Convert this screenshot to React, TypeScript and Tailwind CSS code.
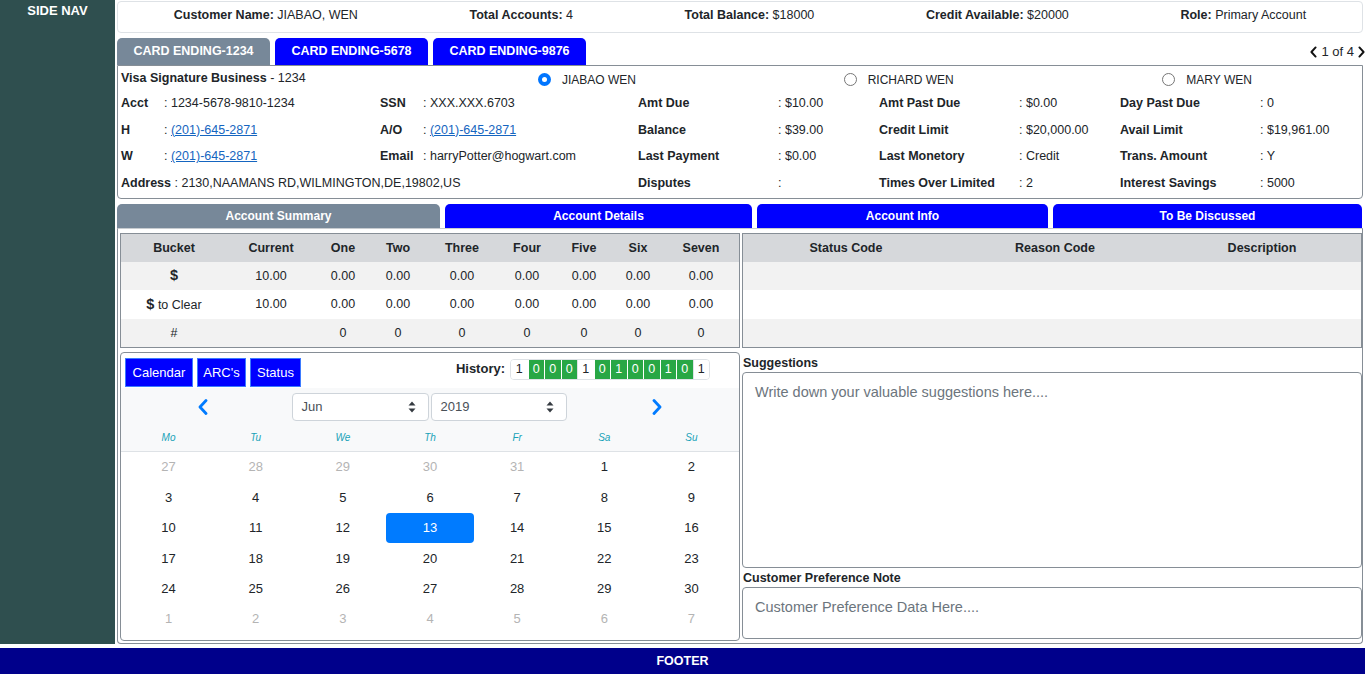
import React from "react";

const FONT = "font-['Liberation_Sans',Arial,sans-serif]";

function Chev({ dir, className }: { dir: "l" | "r"; className?: string }) {
  return (
    <svg viewBox="0 0 10 16" className={className} fill="none">
      <polyline
        points={dir === "l" ? "8,1.5 2,8 8,14.5" : "2,1.5 8,8 2,14.5"}
        stroke="currentColor"
        strokeWidth="2.8"
        strokeLinecap="round"
        strokeLinejoin="round"
      />
    </svg>
  );
}

function UpDown() {
  return (
    <svg viewBox="0 0 8 12" className="w-[8px] h-[12px]">
      <polygon points="4,0.5 7.5,4.5 0.5,4.5" fill="#343a40" />
      <polygon points="4,11.5 7.5,7.5 0.5,7.5" fill="#343a40" />
    </svg>
  );
}

function Radio({ checked }: { checked?: boolean }) {
  return checked ? (
    <span className="inline-block w-[13px] h-[13px] rounded-full bg-[#0075ff] relative shrink-0">
      <span className="absolute left-[4px] top-[4px] w-[5px] h-[5px] rounded-full bg-white" />
    </span>
  ) : (
    <span className="inline-block w-[13px] h-[13px] rounded-full border border-[#767676] bg-white shrink-0" />
  );
}

type Cell = { l: string; v: string; link?: boolean };

const rows: Cell[][] = [
  [
    { l: "Acct", v: "1234-5678-9810-1234" },
    { l: "SSN", v: "XXX.XXX.6703" },
    { l: "Amt Due", v: "$10.00" },
    { l: "Amt Past Due", v: "$0.00" },
    { l: "Day Past Due", v: "0" },
  ],
  [
    { l: "H", v: "(201)-645-2871", link: true },
    { l: "A/O", v: "(201)-645-2871", link: true },
    { l: "Balance", v: "$39.00" },
    { l: "Credit Limit", v: "$20,000.00" },
    { l: "Avail Limit", v: "$19,961.00" },
  ],
  [
    { l: "W", v: "(201)-645-2871", link: true },
    { l: "Email", v: "harryPotter@hogwart.com" },
    { l: "Last Payment", v: "$0.00" },
    { l: "Last Monetory", v: "Credit" },
    { l: "Trans. Amount", v: "Y" },
  ],
];

const lastRow: Cell[] = [
  { l: "Disputes", v: "" },
  { l: "Times Over Limited", v: "2" },
  { l: "Interest Savings", v: "5000" },
];

function Val({ c }: { c: Cell }) {
  return (
    <span>
      {": "}
      {c.link ? <span className="text-[#1565c0] underline">{c.v}</span> : c.v}
    </span>
  );
}

const cellWidths = ["w-[259px]", "w-[258px]", "w-[241px]", "w-[241px]", "flex-1"];
const labelWidths = ["w-[43px]", "w-[43px]", "w-[140px]", "w-[140px]", "w-[140px]"];

const bucketCols = ["Bucket", "Current", "One", "Two", "Three", "Four", "Five", "Six", "Seven"];
const bucketRows = [
  { k: "$", vals: ["10.00", "0.00", "0.00", "0.00", "0.00", "0.00", "0.00", "0.00"], bg: "bg-[#f2f2f2]" },
  { k: "$ to Clear", vals: ["10.00", "0.00", "0.00", "0.00", "0.00", "0.00", "0.00", "0.00"], bg: "bg-white" },
  { k: "#", vals: ["", "0", "0", "0", "0", "0", "0", "0"], bg: "bg-[#f2f2f2]" },
];

const history = ["1", "0", "0", "0", "1", "0", "1", "0", "0", "1", "0", "1"];
const historyGreen = [false, true, true, true, false, true, true, true, true, true, true, false];

const weeks: { d: number; m?: boolean; s?: boolean }[][] = [
  [{ d: 27, m: true }, { d: 28, m: true }, { d: 29, m: true }, { d: 30, m: true }, { d: 31, m: true }, { d: 1 }, { d: 2 }],
  [{ d: 3 }, { d: 4 }, { d: 5 }, { d: 6 }, { d: 7 }, { d: 8 }, { d: 9 }],
  [{ d: 10 }, { d: 11 }, { d: 12 }, { d: 13, s: true }, { d: 14 }, { d: 15 }, { d: 16 }],
  [{ d: 17 }, { d: 18 }, { d: 19 }, { d: 20 }, { d: 21 }, { d: 22 }, { d: 23 }],
  [{ d: 24 }, { d: 25 }, { d: 26 }, { d: 27 }, { d: 28 }, { d: 29 }, { d: 30 }],
  [{ d: 1, m: true }, { d: 2, m: true }, { d: 3, m: true }, { d: 4, m: true }, { d: 5, m: true }, { d: 6, m: true }, { d: 7, m: true }],
];

export default function App() {
  return (
    <div className={`w-[1365px] ${FONT} text-[#212529] text-[12.5px] bg-white`}>
      <div className="flex">
        <aside className="w-[115px] h-[644px] shrink-0 bg-[#2f4f4f] text-white font-bold text-[13px] text-center pt-[3px] leading-[16px]">
          SIDE NAV
        </aside>
        <main className="flex-1 px-[2px] flex flex-col">
          {/* Header */}
          <div className="mt-[1px] h-[32px] border border-[#dee2e6] rounded-[4px] flex items-center justify-around pb-[3px]">
            <div><b>Customer Name:</b> JIABAO, WEN</div>
            <div><b>Total Accounts:</b> 4</div>
            <div><b>Total Balance:</b> $18000</div>
            <div><b>Credit Available:</b> $20000</div>
            <div><b>Role:</b> Primary Account</div>
          </div>

          {/* Card tabs */}
          <div className="mt-[5px] h-[27px] flex gap-[5px] items-stretch">
            <div className="w-[153px] rounded-t-[5px] bg-[#778899] text-white font-bold text-[12.5px] flex items-center justify-center">
              CARD ENDING-1234
            </div>
            <div className="w-[153px] rounded-t-[5px] bg-[#0000ff] text-white font-bold text-[12.5px] flex items-center justify-center">
              CARD ENDING-5678
            </div>
            <div className="w-[153px] rounded-t-[5px] bg-[#0000ff] text-white font-bold text-[12.5px] flex items-center justify-center">
              CARD ENDING-9876
            </div>
            <div className="ml-auto flex items-center gap-[4px] text-[13px] -mr-[2px]">
              <Chev dir="l" className="w-[7px] h-[12px] text-[#111]" />
              <span>1 of 4</span>
              <Chev dir="r" className="w-[7px] h-[12px] text-[#111]" />
            </div>
          </div>

          {/* Card info */}
          <div className="h-[134px] border border-[#868e96] rounded-b-[4px] px-[3px]">
            <div className="h-[24px] flex items-center">
              <div className="w-[309px]">
                <b>Visa Signature Business</b> - 1234
              </div>
              <div className="flex-1 grid grid-cols-3 pt-[3px]">
                <div className="flex items-center gap-[11px] pl-[108px]">
                  <Radio checked />
                  <span className="text-[12px]">JIABAO WEN</span>
                </div>
                <div className="flex items-center gap-[11px] pl-[104px]">
                  <Radio />
                  <span className="text-[12px]">RICHARD WEN</span>
                </div>
                <div className="flex items-center gap-[11px] pl-[113px]">
                  <Radio />
                  <span className="text-[12px]">MARY WEN</span>
                </div>
              </div>
            </div>
            {rows.map((r, i) => (
              <div key={i} className="h-[26.67px] flex items-center">
                {r.map((c, j) => (
                  <div key={j} className={`${cellWidths[j]} flex`}>
                    <span className={`${labelWidths[j]} font-bold shrink-0`}>{c.l}</span>
                    <Val c={c} />
                  </div>
                ))}
              </div>
            ))}
            <div className="h-[26.67px] flex items-center">
              <div className="w-[517px]">
                <b>Address</b> : 2130,NAAMANS RD,WILMINGTON,DE,19802,US
              </div>
              {lastRow.map((c, j) => (
                <div key={j} className={`${cellWidths[j + 2]} flex`}>
                  <span className="w-[140px] font-bold shrink-0">{c.l}</span>
                  <Val c={c} />
                </div>
              ))}
            </div>
          </div>

          {/* Section tabs */}
          <div className="mt-[5px] h-[24px] flex gap-[5px] text-white font-bold text-[12px]">
            <div className="w-[323px] rounded-t-[5px] bg-[#778899] flex items-center justify-center">Account Summary</div>
            <div className="w-[307px] rounded-t-[5px] bg-[#0000ff] flex items-center justify-center">Account Details</div>
            <div className="w-[291px] rounded-t-[5px] bg-[#0000ff] flex items-center justify-center">Account Info</div>
            <div className="w-[309px] rounded-t-[5px] bg-[#0000ff] flex items-center justify-center">To Be Discussed</div>
          </div>

          {/* Panel */}
          <div className="h-[416px] border border-[#868e96] border-t-[#c8ccd0] rounded-b-[4px] pl-[2px] pt-[4px] flex gap-[2px]">
            {/* Left column */}
            <div className="w-[620px] flex flex-col">
              <div className="h-[115px] border border-[#868e96]">
                <div className="grid grid-cols-[106px_88px_56px_54px_74px_56px_58px_50px_76px] h-[28px] bg-[#d6d8db] font-bold text-[12.5px] items-center text-center">
                  {bucketCols.map((c) => (
                    <div key={c}>{c}</div>
                  ))}
                </div>
                {bucketRows.map((r, i) => (
                  <div
                    key={i}
                    className={`grid grid-cols-[106px_88px_56px_54px_74px_56px_58px_50px_76px] ${i === 1 ? "h-[29px]" : "h-[28px]"} ${r.bg} items-center text-center`}
                  >
                    <div>
                      {r.k === "$" ? (
                        <b className="text-[14.5px]">$</b>
                      ) : r.k === "$ to Clear" ? (
                        <span>
                          <b className="text-[14.5px]">$</b> to Clear
                        </span>
                      ) : (
                        r.k
                      )}
                    </div>
                    {r.vals.map((v, j) => (
                      <div key={j}>{v}</div>
                    ))}
                  </div>
                ))}
              </div>

              {/* Calendar box */}
              <div className="mt-[4px] h-[289px] border border-[#868e96] rounded-[4px] flex flex-col">
                <div className="h-[35px] flex items-start pl-[4px] pt-[5px]">
                  <div className="flex gap-[4px]">
                    <div className="w-[68px] h-[29px] bg-[#0000ff] border border-[#3d7bff] text-white text-[13px] flex items-center justify-center">Calendar</div>
                    <div className="w-[49px] h-[29px] bg-[#0000ff] border border-[#3d7bff] text-white text-[13px] flex items-center justify-center">ARC's</div>
                    <div className="w-[51px] h-[29px] bg-[#0000ff] border border-[#3d7bff] text-white text-[13px] flex items-center justify-center">Status</div>
                  </div>
                  <div className="ml-auto mr-[29px] flex items-center gap-[5px] pt-[1px]">
                    <b className="text-[13px] -mt-[2px]">History:</b>
                    <div className="flex rounded-[4px] overflow-hidden border border-[#dee2e6] bg-white">
                      {history.map((h, i) => (
                        <div
                          key={i}
                          className={`w-[16.5px] h-[19px] flex items-center justify-center text-[12.5px] ${
                            historyGreen[i] ? "bg-[#28a745] text-white border-l border-white" : "bg-white text-[#212529] border-l border-[#dee2e6]"
                          } ${i === 0 ? "border-l-0" : ""}`}
                        >
                          {h}
                        </div>
                      ))}
                    </div>
                  </div>
                </div>

                <div className="h-[64px] bg-[#f8f9fa] border-b border-[#dee2e6] flex flex-col">
                  <div className="mt-[5px] h-[28px] flex items-center">
                    <div className="flex-1 flex justify-center text-[#007bff] pr-[6px]">
                      <Chev dir="l" className="w-[10px] h-[16px]" />
                    </div>
                    <div className="flex gap-[2px]">
                      <div className="w-[137px] h-[28px] bg-white border border-[#ced4da] rounded-[4px] flex items-center justify-between pl-[9px] pr-[12px] text-[13px] text-[#495057]">
                        <span>Jun</span>
                        <UpDown />
                      </div>
                      <div className="w-[136px] h-[28px] bg-white border border-[#ced4da] rounded-[4px] flex items-center justify-between pl-[9px] pr-[12px] text-[13px] text-[#495057]">
                        <span>2019</span>
                        <UpDown />
                      </div>
                    </div>
                    <div className="flex-1 flex justify-center text-[#007bff] pl-[8px]">
                      <Chev dir="r" className="w-[10px] h-[16px]" />
                    </div>
                  </div>
                  <div className="mt-[4px] h-[24px] grid grid-cols-7 px-[4px] items-center text-center italic text-[10px] text-[#17a2b8]">
                    {["Mo", "Tu", "We", "Th", "Fr", "Sa", "Su"].map((d) => (
                      <div key={d}>{d}</div>
                    ))}
                  </div>
                </div>

                <div className="px-[4px]">
                  {weeks.map((w, i) => (
                    <div key={i} className="grid grid-cols-7 h-[30.4px] text-[13px] text-center">
                      {w.map((c, j) => (
                        <div
                          key={j}
                          className={`flex items-center justify-center ${
                            c.s ? "bg-[#007bff] text-white rounded-[4px]" : c.m ? "text-[#b4b4b4]" : "text-[#212529]"
                          }`}
                        >
                          {c.d}
                        </div>
                      ))}
                    </div>
                  ))}
                </div>
              </div>
            </div>

            {/* Right column */}
            <div className="flex-1 flex flex-col">
              <div className="h-[115px] border border-[#868e96]">
                <div className="grid grid-cols-3 h-[28px] bg-[#d6d8db] font-bold items-center text-center">
                  <div>Status Code</div>
                  <div className="pl-[6px]">Reason Code</div>
                  <div className="pl-[8px]">Description</div>
                </div>
                <div className="h-[28px] bg-[#f2f2f2]" />
                <div className="h-[29px] bg-white" />
                <div className="h-[28px] bg-[#f2f2f2]" />
              </div>
              <div className="mt-[7px] h-[16px] leading-[16px] font-bold pl-[1px]">Suggestions</div>
              <div className="mt-[1px] h-[196px] border border-[#868e96] rounded-[4px] px-[12px] pt-[9px] text-[14.5px] text-[#6c757d]">
                Write down your valuable suggestions here....
              </div>
              <div className="mt-[2px] h-[16px] leading-[16px] font-bold pl-[1px]">Customer Preference Note</div>
              <div className="mt-[1px] h-[52px] border border-[#868e96] rounded-[4px] px-[12px] pt-[9px] text-[14.5px] text-[#6c757d]">
                Customer Preference Data Here....
              </div>
            </div>
          </div>
        </main>
      </div>
      <footer className="mt-[4px] h-[26px] bg-[#00008b] text-white font-bold text-[12.5px] flex items-center justify-center">
        FOOTER
      </footer>
    </div>
  );
}
